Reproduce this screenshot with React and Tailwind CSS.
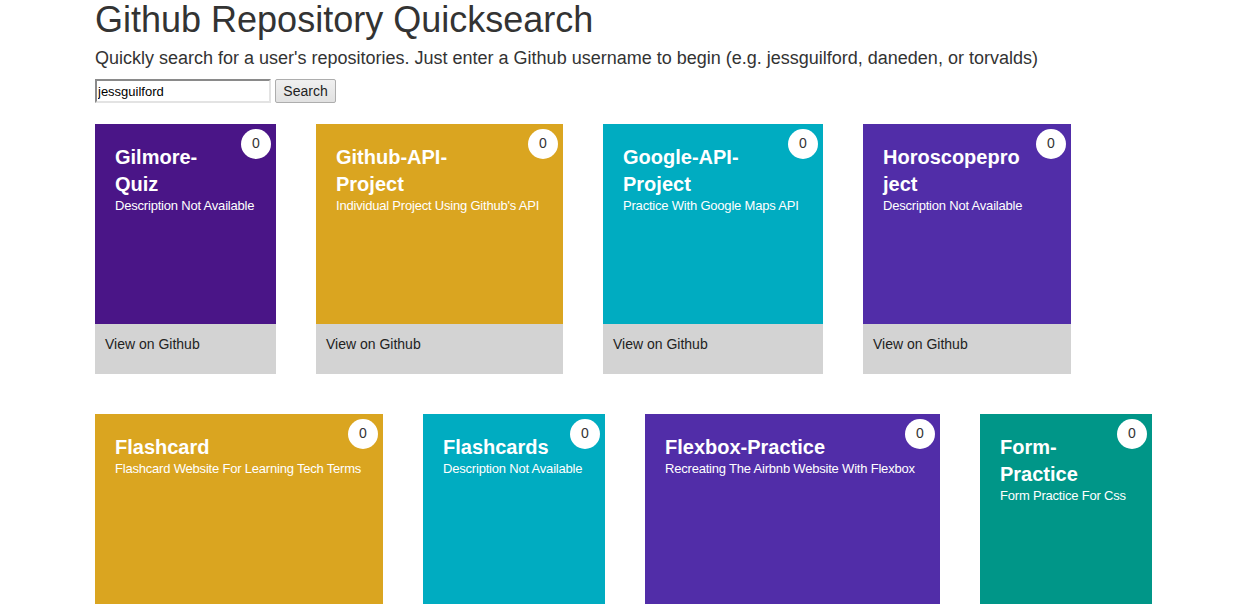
import React from "react";

const row1 = [
  { w: "w-[181px]", bg: "bg-[#4a1587]", t: ["Gilmore-", "Quiz"], d: "Description Not Available" },
  { w: "w-[247px]", bg: "bg-[#daa520]", t: ["Github-API-", "Project"], d: "Individual Project Using Github's API" },
  { w: "w-[220px]", bg: "bg-[#00acc1]", t: ["Google-API-", "Project"], d: "Practice With Google Maps API" },
  { w: "w-[208px]", bg: "bg-[#512da8]", t: ["Horoscopepro", "ject"], d: "Description Not Available" },
];
const row2 = [
  { w: "w-[288px]", bg: "bg-[#daa520]", t: ["Flashcard"], d: "Flashcard Website For Learning Tech Terms" },
  { w: "w-[182px]", bg: "bg-[#00acc1]", t: ["Flashcards"], d: "Description Not Available" },
  { w: "w-[295px]", bg: "bg-[#512da8]", t: ["Flexbox-Practice"], d: "Recreating The Airbnb Website With Flexbox" },
  { w: "w-[172px]", bg: "bg-[#009688]", t: ["Form-", "Practice"], d: "Form Practice For Css" },
];

function Card({ c }) {
  return (
    <div className={`${c.w} shrink-0 flex flex-col`}>
      <div className={`${c.bg} relative h-[200px] pt-[20px] px-[20px] text-white`}>
        <div className="absolute top-[5px] right-[5px] w-[30px] h-[30px] rounded-full bg-white text-[#333] text-[14px] leading-[28px] text-center">
          0
        </div>
        <div className="text-[20px] leading-[27px] font-bold">
          {c.t.map((l, i) => (
            <div key={i}>{l}</div>
          ))}
        </div>
        <div className="text-[13px] leading-[16px] tracking-[-0.2px] whitespace-nowrap">{c.d}</div>
      </div>
      <div className="h-[50px] bg-[#d3d3d3] text-[#222] text-[14px] leading-[16px] pl-[10px] pt-[12px]">
        View on Github
      </div>
    </div>
  );
}

export default function App() {
  return (
    <div className="bg-white h-[604px] overflow-hidden pl-[95px] text-[#333] font-['Liberation_Sans',Arial,sans-serif]">
      <h1 className="text-[36px] leading-[40px] font-normal m-0">Github Repository Quicksearch</h1>
      <p className="text-[18px] leading-[20px] mt-[8px]">
        Quickly search for a user's repositories. Just enter a Github username to begin (e.g. jessguilford, daneden, or torvalds)
      </p>
      <div className="flex items-center gap-[4px] mt-[11px] h-[24px]">
        <input
          defaultValue="jessguilford"
          className="w-[176px] h-[24px] border-2 border-t-[#8a8a8a] border-l-[#8a8a8a] border-r-[#e3e3e3] border-b-[#e3e3e3] text-[13px] px-[1px] text-black outline-none"
        />
        <button className="h-[24px] w-[61px] text-[14px] text-[#222] border border-[#adadad] rounded-[2px] bg-gradient-to-b from-[#f0f0f0] to-[#e1e1e1]">
          Search
        </button>
      </div>
      <div className="flex gap-[40px] mt-[21px]">
        {row1.map((c, i) => (
          <Card key={i} c={c} />
        ))}
      </div>
      <div className="flex gap-[40px] mt-[40px]">
        {row2.map((c, i) => (
          <Card key={i} c={c} />
        ))}
      </div>
    </div>
  );
}
